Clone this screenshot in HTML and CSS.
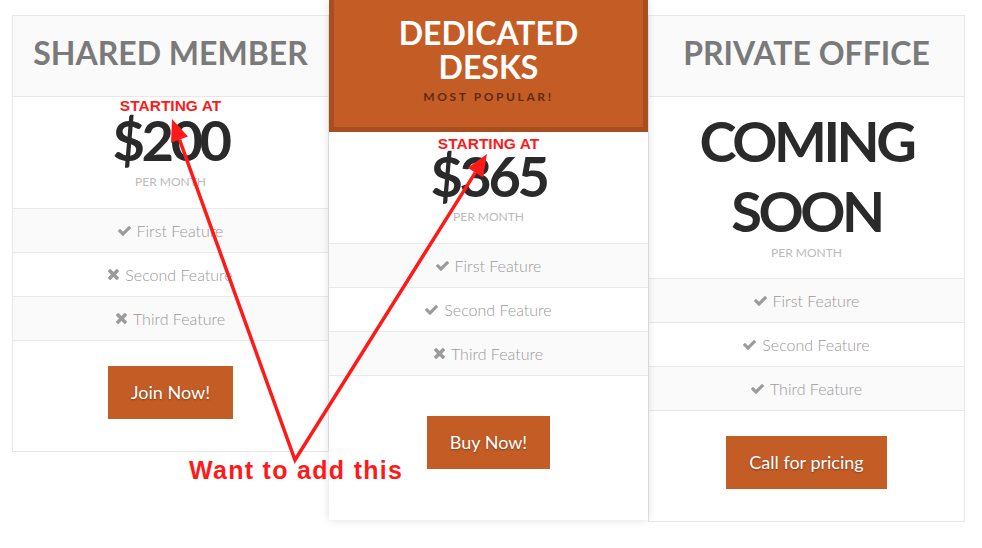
FILE: index.html
```html
<!DOCTYPE html>
<html lang="en">
<head>
<meta charset="utf-8">
<title>Pricing</title>
<link rel="stylesheet" href="styles.css">
</head>
<body>
<div class="pricing">
  <div class="card">
    <div class="card-head"><h2 class="plan">SHARED MEMBER</h2></div>
    <div class="price-box">
      <div class="starting">STARTING AT</div>
      <div class="price">$200</div>
      <div class="per">PER MONTH</div>
    </div>
    <ul class="features">
      <li class="alt"><svg class="ico ico-check" viewBox="121 334 1550 1188"><path d="M1671 566q0 40-28 68l-724 724-136 136q-28 28-68 28t-68-28l-136-136-362-362q-28-28-28-68t28-68l136-136q28-28 68-28t68 28l294 295 656-657q28-28 68-28t68 28l136 136q28 28 28 68z"/></svg>First Feature</li>
      <li><svg class="ico ico-times" viewBox="110 366 1188 1188"><path d="M1298 1322q0 40-28 68l-136 136q-28 28-68 28t-68-28l-294-294-294 294q-28 28-68 28t-68-28l-136-136q-28-28-28-68t28-68l294-294-294-294q-28-28-28-68t28-68l136-136q28-28 68-28t68 28l294 294 294-294q28-28 68-28t68 28l136 136q28 28 28 68t-28 68l-294 294 294 294q28 28 28 68z"/></svg>Second Feature</li>
      <li class="alt"><svg class="ico ico-times" viewBox="110 366 1188 1188"><path d="M1298 1322q0 40-28 68l-136 136q-28 28-68 28t-68-28l-294-294-294 294q-28 28-68 28t-68-28l-136-136q-28-28-28-68t28-68l294-294-294-294q-28-28-28-68t28-68l136-136q28-28 68-28t68 28l294 294 294-294q28-28 68-28t68 28l136 136q28 28 28 68t-28 68l-294 294 294 294q28 28 28 68z"/></svg>Third Feature</li>
    </ul>
    <div class="action"><a class="btn" href="#">Join Now!</a></div>
  </div>

  <div class="card featured">
    <div class="card-head head-featured">
      <h2 class="plan plan-featured">DEDICATED<br>DESKS</h2>
      <div class="popular">MOST POPULAR!</div>
    </div>
    <div class="price-box">
      <div class="starting starting-featured">STARTING AT</div>
      <div class="price price-featured">$365</div>
      <div class="per">PER MONTH</div>
    </div>
    <ul class="features">
      <li class="alt"><svg class="ico ico-check" viewBox="121 334 1550 1188"><path d="M1671 566q0 40-28 68l-724 724-136 136q-28 28-68 28t-68-28l-136-136-362-362q-28-28-28-68t28-68l136-136q28-28 68-28t68 28l294 295 656-657q28-28 68-28t68 28l136 136q28 28 28 68z"/></svg>First Feature</li>
      <li><svg class="ico ico-check" viewBox="121 334 1550 1188"><path d="M1671 566q0 40-28 68l-724 724-136 136q-28 28-68 28t-68-28l-136-136-362-362q-28-28-28-68t28-68l136-136q28-28 68-28t68 28l294 295 656-657q28-28 68-28t68 28l136 136q28 28 28 68z"/></svg>Second Feature</li>
      <li class="alt"><svg class="ico ico-times" viewBox="110 366 1188 1188"><path d="M1298 1322q0 40-28 68l-136 136q-28 28-68 28t-68-28l-294-294-294 294q-28 28-68 28t-68-28l-136-136q-28-28-28-68t28-68l294-294-294-294q-28-28-28-68t28-68l136-136q28-28 68-28t68 28l294 294 294-294q28-28 68-28t68 28l136 136q28 28 28 68t-28 68l-294 294 294 294q28 28 28 68z"/></svg>Third Feature</li>
    </ul>
    <div class="action action-featured"><a class="btn" href="#">Buy Now!</a></div>
  </div>

  <div class="card">
    <div class="card-head"><h2 class="plan">PRIVATE OFFICE</h2></div>
    <div class="price-box price-box-soon">
      <div class="price">COMING<br>SOON</div>
      <div class="per">PER MONTH</div>
    </div>
    <ul class="features">
      <li class="alt"><svg class="ico ico-check" viewBox="121 334 1550 1188"><path d="M1671 566q0 40-28 68l-724 724-136 136q-28 28-68 28t-68-28l-136-136-362-362q-28-28-28-68t28-68l136-136q28-28 68-28t68 28l294 295 656-657q28-28 68-28t68 28l136 136q28 28 28 68z"/></svg>First Feature</li>
      <li><svg class="ico ico-check" viewBox="121 334 1550 1188"><path d="M1671 566q0 40-28 68l-724 724-136 136q-28 28-68 28t-68-28l-136-136-362-362q-28-28-28-68t28-68l136-136q28-28 68-28t68 28l294 295 656-657q28-28 68-28t68 28l136 136q28 28 28 68z"/></svg>Second Feature</li>
      <li class="alt"><svg class="ico ico-check" viewBox="121 334 1550 1188"><path d="M1671 566q0 40-28 68l-724 724-136 136q-28 28-68 28t-68-28l-136-136-362-362q-28-28-28-68t28-68l136-136q28-28 68-28t68 28l294 295 656-657q28-28 68-28t68 28l136 136q28 28 28 68z"/></svg>Third Feature</li>
    </ul>
    <div class="action"><a class="btn" href="#">Call for pricing</a></div>
  </div>
</div>

<svg class="annotation" width="982" height="548" viewBox="0 0 982 548">
  <polyline class="arrow-line" points="179.5,139.7 295,460 475.3,172.6"/>
  <polygon class="arrow-head" points="172,119 188,136.6 171,142.8"/>
  <polygon class="arrow-head" points="487,154 482.9,177.4 467.7,167.8"/>
  <text class="note" x="189" y="479">Want to add this</text>
</svg>
</body>
</html>
```

FILE: styles.css
```css
html, body {
  margin: 0;
  padding: 0;
  background: #ffffff;
}

body {
  font-family: Lato, "Open Sans", "DejaVu Sans", sans-serif;
  width: 982px;
  height: 548px;
  overflow: hidden;
  position: relative;
}

.pricing {
  display: flex;
  align-items: flex-start;
  padding-left: 12px;
}

.card {
  box-sizing: border-box;
  width: 317px;
  margin-top: 15px;
  border: 1px solid #e7e7e7;
  background: #ffffff;
  text-align: center;
}

.card.featured {
  width: 319px;
  margin-top: 0;
  border: none;
  box-shadow: 0 0 9px rgba(0, 0, 0, 0.13);
  position: relative;
  z-index: 1;
}

.card-head {
  background: #fafafa;
  border-bottom: 1px solid #e7e7e7;
  padding-bottom: 6px;
}

.plan {
  margin: 0;
  font-size: 32px;
  line-height: 74px;
  font-weight: 700;
  color: #7a7a7a;
}

.head-featured {
  background: #c45c26;
  border: 5px solid #a94f1f;
  border-top: none;
  padding: 16px 0 22px;
}

.plan-featured {
  color: #ffffff;
  line-height: 34px;
}

.popular {
  margin-top: 5px;
  font-size: 12px;
  line-height: 16px;
  font-weight: 700;
  letter-spacing: 2.6px;
  color: #5e2b12;
}

.price-box {
  padding: 1px 0 19px;
  border-bottom: 1px solid #e9e9e9;
}

.price-box-soon {
  padding: 9px 0 18px;
}

.starting {
  font-family: "Liberation Sans", Arial, sans-serif;
  font-weight: 700;
  font-size: 15.5px;
  line-height: 16px;
  color: #ff1a1a;
}

.starting-featured {
  margin-top: 3px;
}

.price {
  font-size: 56px;
  line-height: 70px;
  font-weight: 700;
  color: #2a2a2a;
  letter-spacing: -3.5px;
}

.starting + .price {
  margin-top: -9px;
}

.starting-featured + .price-featured {
  margin-top: -11px;
}

.per {
  font-size: 12px;
  line-height: 14px;
  color: #bbbbbb;
}

.price-featured + .per {
  margin-top: -1px;
}

.features {
  list-style: none;
  margin: 0;
  padding: 0;
}

.features li {
  display: flex;
  align-items: center;
  justify-content: center;
  height: 43px;
  border-bottom: 1px solid #e9e9e9;
  font-size: 16px;
  font-weight: 300;
  color: #999999;
  background: #ffffff;
}

.features li.alt {
  background: #fafafa;
}

.ico {
  fill: #9b9b9b;
  margin-right: 6px;
}

.ico-check {
  width: 13px;
  height: 10px;
}

.ico-times {
  width: 11px;
  height: 11px;
}

.action {
  padding: 25px 0 32px;
}

.action-featured {
  padding: 40px 0 51px;
}

.btn {
  display: inline-block;
  height: 53px;
  line-height: 53px;
  padding: 0 23px;
  background: #c45c26;
  color: #ffffff;
  font-size: 18px;
  text-decoration: none;
  text-shadow: 0 1px 2px rgba(0, 0, 0, 0.35);
  vertical-align: top;
}

.annotation {
  position: absolute;
  top: 0;
  left: 0;
  z-index: 5;
  pointer-events: none;
}

.arrow-line {
  fill: none;
  stroke: #ff1a1a;
  stroke-width: 3.5;
  stroke-linejoin: miter;
  stroke-miterlimit: 20;
}

.arrow-head {
  fill: #ff1a1a;
}

.note {
  font-family: "Liberation Sans", Arial, sans-serif;
  font-weight: 700;
  font-size: 25px;
  letter-spacing: 1.3px;
  fill: #ff1a1a;
}
```
